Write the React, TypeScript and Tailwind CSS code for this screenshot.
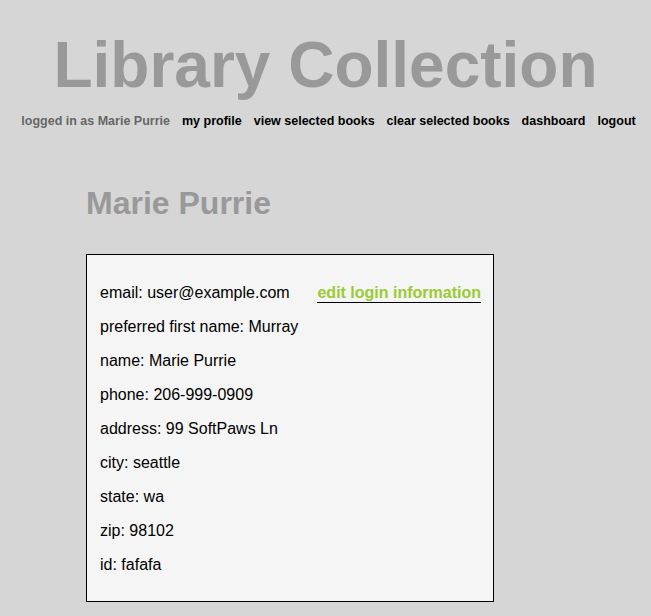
import React from 'react';

const navLinks = ['my profile', 'view selected books', 'clear selected books', 'dashboard', 'logout'];

const fields: [string, string][] = [
  ['preferred first name', 'Murray'],
  ['name', 'Marie Purrie'],
  ['phone', '206-999-0909'],
  ['address', '99 SoftPaws Ln'],
  ['city', 'seattle'],
  ['state', 'wa'],
  ['zip', '98102'],
  ['id', 'fafafa'],
];

const App: React.FC = () => {
  return (
    <div className="min-h-screen bg-[#d6d6d6] font-['Liberation_Sans',Arial,sans-serif] pb-10">
      <h1 className="pt-[33px] text-center text-[64px] font-bold leading-[64px] text-[#999999]">
        Library Collection
      </h1>

      <nav className="mt-[16px] flex justify-center gap-[12px] pl-[6px] text-[12.5px] font-bold leading-[16px]">
        <span className="text-[#666666]">logged in as Marie Purrie</span>
        {navLinks.map((link) => (
          <a key={link} href="#" className="text-black">
            {link}
          </a>
        ))}
      </nav>

      <div className="ml-[86px]">
        <h2 className="mt-[56px] text-[32px] font-bold leading-[36px] text-[#999999]">Marie Purrie</h2>

        <div className="mt-[33px] w-[408px] border border-black bg-[#f5f5f5] pl-[13px] pr-[12px] pt-[29px] pb-[27px] text-[16px] leading-[18px] text-black">
          <div className="flex flex-col gap-4">
            <div className="flex h-[18px] items-start justify-between">
              <span>email: user@example.com</span>
              <a href="#" className="border-b border-black font-bold text-[#99cc33]">
                edit login information
              </a>
            </div>
            {fields.map(([label, value]) => (
              <div key={label} className="h-[18px]">
                {label}: {value}
              </div>
            ))}
          </div>
        </div>
      </div>
    </div>
  );
};

export default App;
